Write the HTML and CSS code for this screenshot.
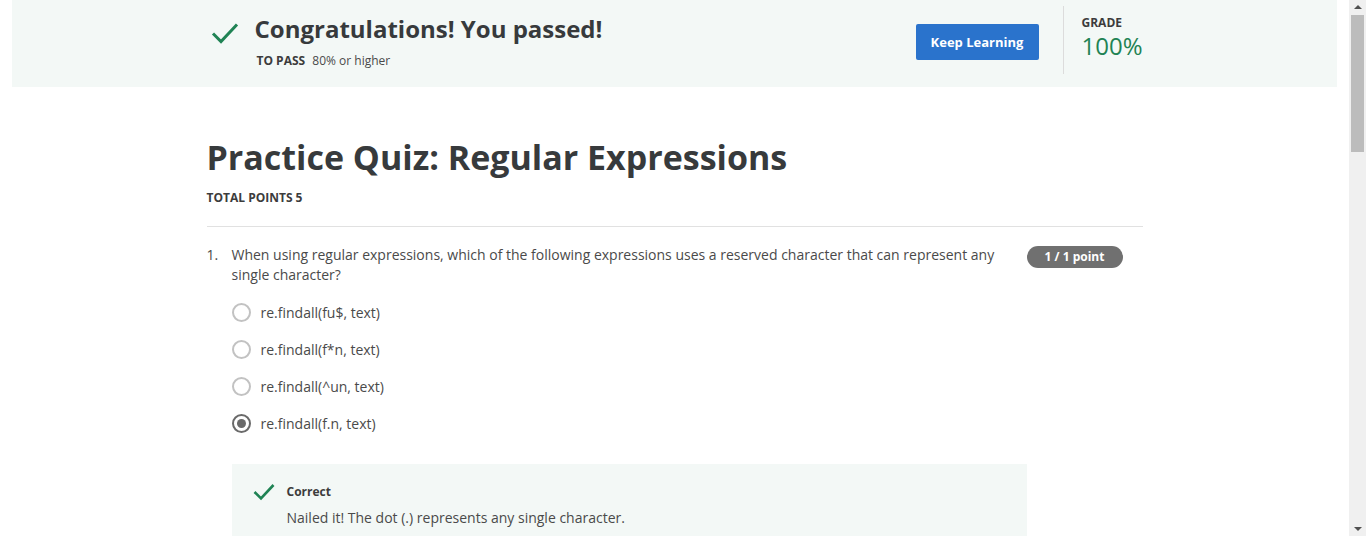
FILE: index.html
```html
<!DOCTYPE html>
<html lang="en">
<head>
<meta charset="utf-8">
<title>Practice Quiz: Regular Expressions</title>
<link rel="stylesheet" href="styles.css">
</head>
<body>
<div class="page">
  <div class="viewport">
    <header class="banner">
      <div class="banner-inner">
        <div class="pass">
          <svg class="pass-check" width="28" height="22" viewBox="0 0 28 22"><path d="M2 11.5 L10 19.5 L26 2.5" fill="none" stroke="#1f8354" stroke-width="3"/></svg>
          <div class="pass-text">
            <h2 class="pass-title">Congratulations! You passed!</h2>
            <div class="pass-sub"><span class="label">TO PASS</span> 80% or higher</div>
          </div>
        </div>
        <div class="banner-actions">
          <button class="btn-primary">Keep Learning</button>
          <div class="grade">
            <div class="label">GRADE</div>
            <div class="grade-value">100%</div>
          </div>
        </div>
      </div>
    </header>

    <main class="content">
      <h1 class="quiz-title">Practice Quiz: Regular Expressions</h1>
      <div class="total label">TOTAL POINTS 5</div>
      <hr class="divider">

      <section class="question">
        <div class="q-num">1.</div>
        <div class="q-body">
          <p class="q-text">When using regular expressions, which of the following expressions uses a reserved character that can represent any single character?</p>
          <ul class="options">
            <li class="option"><span class="radio"></span><span>re.findall(fu$, text)</span></li>
            <li class="option"><span class="radio"></span><span>re.findall(f*n, text)</span></li>
            <li class="option"><span class="radio"></span><span>re.findall(^un, text)</span></li>
            <li class="option"><span class="radio checked"></span><span>re.findall(f.n, text)</span></li>
          </ul>
          <div class="feedback">
            <svg class="fb-check" width="22" height="18" viewBox="0 0 22 18"><path d="M1.5 9 L8 15.5 L20.5 2" fill="none" stroke="#1f8354" stroke-width="2.6"/></svg>
            <div class="fb-text">
              <div class="fb-title">Correct</div>
              <div class="fb-msg">Nailed it! The dot (.) represents any single character.</div>
            </div>
          </div>
        </div>
        <div class="badge">1 / 1 point</div>
      </section>
    </main>
  </div>
  <div class="scrollbar">
    <div class="sb-arrow up"></div>
    <div class="sb-track"><div class="sb-thumb"></div></div>
    <div class="sb-arrow down"></div>
  </div>
</div>
</body>
</html>
```
FILE: styles.css
```css
* { box-sizing: border-box; }
html, body {
  margin: 0;
  padding: 0;
  height: 536px;
  overflow: hidden;
  background: #fff;
  font-family: "Open Sans", "Liberation Sans", sans-serif;
  color: #373a3c;
}
.page {
  display: flex;
  height: 536px;
}
.viewport {
  flex: 1;
  overflow: hidden;
  padding: 0 12px;
}
.banner {
  background: #f3f8f6;
  height: 87px;
}
.banner-inner {
  width: 936px;
  margin: 0 auto;
  display: flex;
  justify-content: space-between;
  height: 100%;
}
.pass {
  display: flex;
  align-items: flex-start;
  padding-top: 13px;
}
.pass-check {
  margin: 9px 0 0 4px;
}
.pass-text {
  margin-left: 16px;
}
.pass-title {
  margin: 0;
  font-size: 24px;
  font-weight: 700;
  line-height: 32px;
  color: #373a3c;
}
.pass-sub {
  margin: 8px 0 0 2px;
  font-size: 12px;
  color: #4a4a4a;
  line-height: 16px;
}
.label {
  font-weight: 700;
  font-size: 12px;
  color: #3c3c3c;
  margin-right: 4px;
}
.banner-actions {
  display: flex;
  align-items: flex-start;
}
.btn-primary {
  margin-top: 24px;
  width: 123px;
  height: 36px;
  background: #2a73cc;
  color: #fff;
  border: none;
  border-radius: 2px;
  font-family: "Open Sans", "Liberation Sans", sans-serif;
  font-weight: 700;
  font-size: 13px;
}
.grade {
  margin: 6px 0 0 24px;
  border-left: 1px solid #dcdcdc;
  height: 68px;
  padding: 9px 0 0 18px;
  width: 80px;
}
.grade .label {
  display: block;
  line-height: 16px;
}
.grade-value {
  font-size: 24px;
  line-height: 30px;
  color: #1f8354;
}
.content {
  width: 936px;
  margin: 0 auto;
  padding-top: 48px;
}
.quiz-title {
  margin: -2px 0 0;
  font-size: 34px;
  line-height: 48px;
  font-weight: 700;
  color: #373a3c;
}
.total {
  margin-top: 9px;
  display: block;
  line-height: 16px;
}
.divider {
  border: 0;
  border-top: 1px solid #e1e1e1;
  margin: 20px 0 0;
}
.question {
  display: flex;
  margin-top: 18px;
}
.q-num {
  width: 25px;
  font-size: 14px;
  line-height: 20px;
  color: #4a4a4a;
}
.q-body {
  flex: 1;
}
.q-text {
  margin: 0;
  width: 780px;
  font-size: 14px;
  line-height: 20px;
  color: #4a4a4a;
}
.options {
  list-style: none;
  margin: 9px 0 0;
  padding: 0;
}
.option {
  display: flex;
  align-items: center;
  height: 37px;
  font-size: 14px;
  color: #4a4a4a;
}
.radio {
  width: 19px;
  height: 19px;
  border: 2px solid #c2c2c2;
  border-radius: 50%;
  margin-right: 10px;
  display: flex;
  align-items: center;
  justify-content: center;
}
.radio.checked {
  border-color: #6a6a6a;
}
.radio.checked::after {
  content: "";
  width: 9px;
  height: 9px;
  border-radius: 50%;
  background: #6a6a6a;
}
.feedback {
  margin-top: 22px;
  width: 795px;
  background: #f3f8f6;
  display: flex;
  padding: 18px 20px 20px 21px;
}
.fb-check {
  margin-top: 1px;
}
.fb-text {
  margin-left: 12px;
}
.fb-title {
  font-size: 12px;
  font-weight: 700;
  color: #3c3c3c;
  line-height: 20px;
}
.fb-msg {
  margin-top: 6px;
  font-size: 14px;
  line-height: 20px;
  color: #4a4a4a;
}
.badge {
  margin: 1px 20px 0 0;
  width: 96px;
  height: 22px;
  border-radius: 11px;
  background: #707070;
  color: #fff;
  font-size: 12px;
  font-weight: 700;
  line-height: 22px;
  text-align: center;
  align-self: flex-start;
}
.scrollbar {
  width: 17px;
  background: #f0f0f0;
  display: flex;
  flex-direction: column;
  align-items: center;
}
.sb-arrow {
  width: 0;
  height: 0;
  border-left: 4px solid transparent;
  border-right: 4px solid transparent;
  margin: 5px 0;
}
.sb-arrow.up { border-bottom: 4px solid #505050; }
.sb-arrow.down { border-top: 4px solid #505050; }
.sb-track {
  flex: 1;
  width: 100%;
  padding: 1px 2px 0;
}
.sb-thumb {
  height: 137px;
  background: #bcbcbc;
}
```
